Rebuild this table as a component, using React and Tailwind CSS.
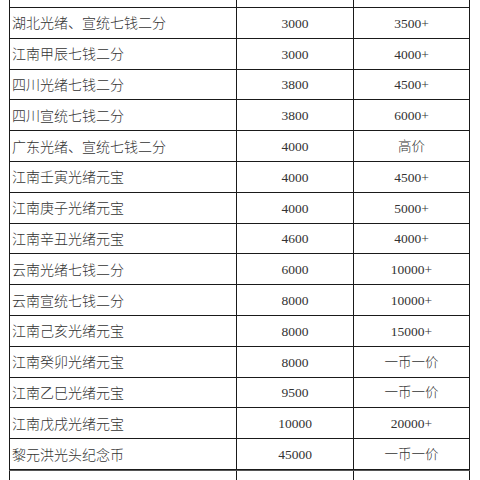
const rows = [
  ["湖北光绪、宣统七钱二分", "3000", "3500+"],
  ["江南甲辰七钱二分", "3000", "4000+"],
  ["四川光绪七钱二分", "3800", "4500+"],
  ["四川宣统七钱二分", "3800", "6000+"],
  ["广东光绪、宣统七钱二分", "4000", "高价"],
  ["江南壬寅光绪元宝", "4000", "4500+"],
  ["江南庚子光绪元宝", "4000", "5000+"],
  ["江南辛丑光绪元宝", "4600", "4000+"],
  ["云南光绪七钱二分", "6000", "10000+"],
  ["云南宣统七钱二分", "8000", "10000+"],
  ["江南己亥光绪元宝", "8000", "15000+"],
  ["江南癸卯光绪元宝", "8000", "一币一价"],
  ["江南乙巳光绪元宝", "9500", "一币一价"],
  ["江南戊戌光绪元宝", "10000", "20000+"],
  ["黎元洪光头纪念币", "45000", "一币一价"],
];

const font = {
  fontFamily: '"Liberation Serif", "Noto Sans CJK SC", serif',
};

const App = () => {

  return (

    <div className="w-[480px] h-[480px] overflow-hidden bg-white text-[#333]" style={font}>

      <div className="ml-[9px] w-[461px]">

        {/* top cut-off row */}
        <div className="grid grid-cols-[228px_117px_116px] h-[8px]">
          <div className="border-l border-r border-b border-[#1a1a1a]" />
          <div className="border-r border-b border-[#1a1a1a]" />
          <div className="border-r border-b border-[#1a1a1a]" />
        </div>

        {
          rows.map((row, index) => (

            <div
              key={index}
              className="grid grid-cols-[228px_117px_116px] h-[30.8px]"
            >

              <div className="flex items-center pl-[2px] pt-[2px] text-[14px] font-light border-l border-r border-b border-[#1a1a1a]">
                {row[0]}
              </div>

              <div className="flex items-center justify-center pt-[2px] text-[13.5px] font-light border-r border-b border-[#1a1a1a]">
                {row[1]}
              </div>

              <div className="flex items-center justify-center pt-[2px] text-[13.5px] font-light border-r border-b border-[#1a1a1a]">
                {row[2]}
              </div>

            </div>

          ))
        }

        {/* bottom cut-off row */}
        <div className="grid grid-cols-[228px_117px_116px] h-[12px] border-t border-[#555]">
          <div className="border-l border-r border-[#1a1a1a]" />
          <div className="border-r border-[#1a1a1a]" />
          <div className="border-r border-[#1a1a1a]" />
        </div>

      </div>

    </div>

  );

};

export default App;
